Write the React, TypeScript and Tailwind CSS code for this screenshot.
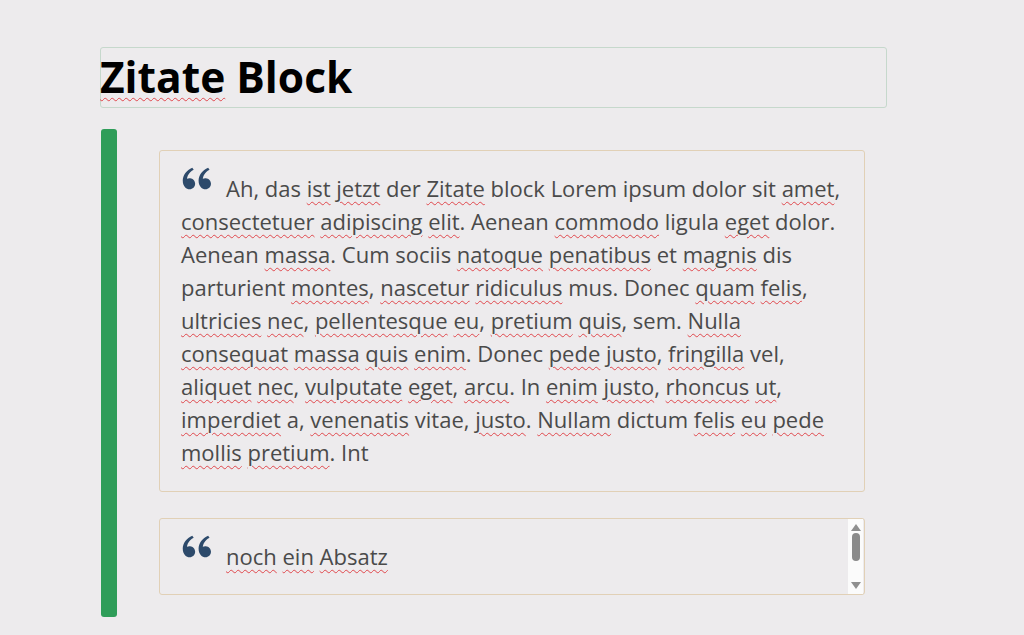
import React from "react";

const W = ({ children }: { children: React.ReactNode }) => (
  <span className="underline decoration-wavy decoration-[#e0484d] decoration-1 underline-offset-[4px]">
    {children}
  </span>
);

const QuoteMark = () => (
  <span className="relative inline-block w-[45px] h-[20px] align-baseline">
    <svg
      viewBox="0 0 24 24"
      className="absolute left-[-3px] top-[-17px] w-[38px] h-[38px] fill-[#2d4a6b]"
    >
      <path d="M4.58341 17.3211C3.55316 16.2274 3 15 3 13.0103C3 9.51086 5.45651 6.37366 9.03059 4.82318L9.92328 6.20079C6.58804 8.00539 5.93618 10.3459 5.67564 11.8222C6.21263 11.5443 6.91558 11.4466 7.60471 11.5105C9.40908 11.6778 10.8312 13.159 10.8312 15.0001C10.8312 16.933 9.26416 18.5001 7.33116 18.5001C6.2581 18.5001 5.23196 18.0095 4.58341 17.3211ZM14.5834 17.3211C13.5532 16.2274 13 15 13 13.0103C13 9.51086 15.4565 6.37366 19.0306 4.82318L19.9233 6.20079C16.588 8.00539 15.9362 10.3459 15.6756 11.8222C16.2126 11.5443 16.9156 11.4466 17.6047 11.5105C19.4091 11.6778 20.8312 13.159 20.8312 15.0001C20.8312 16.933 19.2642 18.5001 17.3312 18.5001C16.2581 18.5001 15.232 18.0095 14.5834 17.3211Z" />
    </svg>
  </span>
);

export default function App() {
  return (
    <div
      className="min-h-[635px] w-full bg-[#edebed] pt-[47px] pl-[100px]"
      style={{ fontFamily: '"Open Sans", "Noto Sans", sans-serif' }}
    >
      <div className="w-[787px]">
        <div className="h-[61px] border border-[#c6d8cc] rounded-[3px] flex items-center">
          <h1 className="text-[42.5px] font-bold text-black leading-none -ml-px">
            <W>Zitate</W> Block
          </h1>
        </div>

        <div className="mt-[21px] flex">
          <div className="w-[16px] ml-px bg-[#2f9d59] rounded-[3px]" />
          <div className="pl-[42px] pt-[21px] pb-[22px] flex flex-col gap-[26px]">
            <div className="w-[706px] border border-[#e1d0b6] rounded-[3px] pl-[21px] pr-[20px] pt-[21px] pb-[22px]">
              <p className="text-[22px] leading-[33px] text-[#4a4a4a] whitespace-nowrap">
                <QuoteMark />Ah, das <W>ist</W> <W>jetzt</W> der <W>Zitate</W> block Lorem ipsum dolor sit <W>amet</W>,
                <br />
                <W>consectetuer</W> <W>adipiscing</W> <W>elit</W>. Aenean <W>commodo</W> ligula <W>eget</W> dolor.
                <br />
                Aenean <W>massa</W>. Cum sociis <W>natoque</W> <W>penatibus</W> et <W>magnis</W> dis
                <br />
                parturient <W>montes</W>, <W>nascetur</W> <W>ridiculus</W> mus. Donec <W>quam</W> <W>felis</W>,
                <br />
                <W>ultricies</W> <W>nec</W>, <W>pellentesque</W> <W>eu</W>, <W>pretium</W> <W>quis</W>, sem. <W>Nulla</W>
                <br />
                <W>consequat</W> <W>massa</W> <W>quis</W> <W>enim</W>. Donec <W>pede</W> <W>justo</W>, <W>fringilla</W> vel,
                <br />
                <W>aliquet</W> <W>nec</W>, <W>vulputate</W> <W>eget</W>, <W>arcu</W>. In <W>enim</W> <W>justo</W>, <W>rhoncus</W> <W>ut</W>,
                <br />
                <W>imperdiet</W> a, <W>venenatis</W> vitae, <W>justo</W>. <W>Nullam</W> dictum <W>felis</W> <W>eu</W> <W>pede</W>
                <br />
                <W>mollis</W> <W>pretium</W>. Int
              </p>
            </div>

            <div className="relative w-[706px] border border-[#e1d0b6] rounded-[3px] pl-[21px] pr-[20px] pt-[21px] pb-[21px]">
              <p className="text-[22px] leading-[33px] text-[#4a4a4a] whitespace-nowrap">
                <QuoteMark />
                <W>noch</W> <W>ein</W> <W>Absatz</W>
              </p>
              <div className="absolute right-px top-0 bottom-0 w-[15px] bg-[#fbfbfb] flex flex-col items-center justify-between py-[5px]">
                <div className="w-0 h-0 border-l-[5px] border-r-[5px] border-b-[7px] border-l-transparent border-r-transparent border-b-[#8f8f8f]" />
                <div className="w-[8px] h-[28px] rounded-[4px] bg-[#8a8a8a] -mt-[20px]" />
                <div className="w-0 h-0 border-l-[5px] border-r-[5px] border-t-[7px] border-l-transparent border-r-transparent border-t-[#8f8f8f]" />
              </div>
            </div>
          </div>
        </div>
      </div>
    </div>
  );
}
